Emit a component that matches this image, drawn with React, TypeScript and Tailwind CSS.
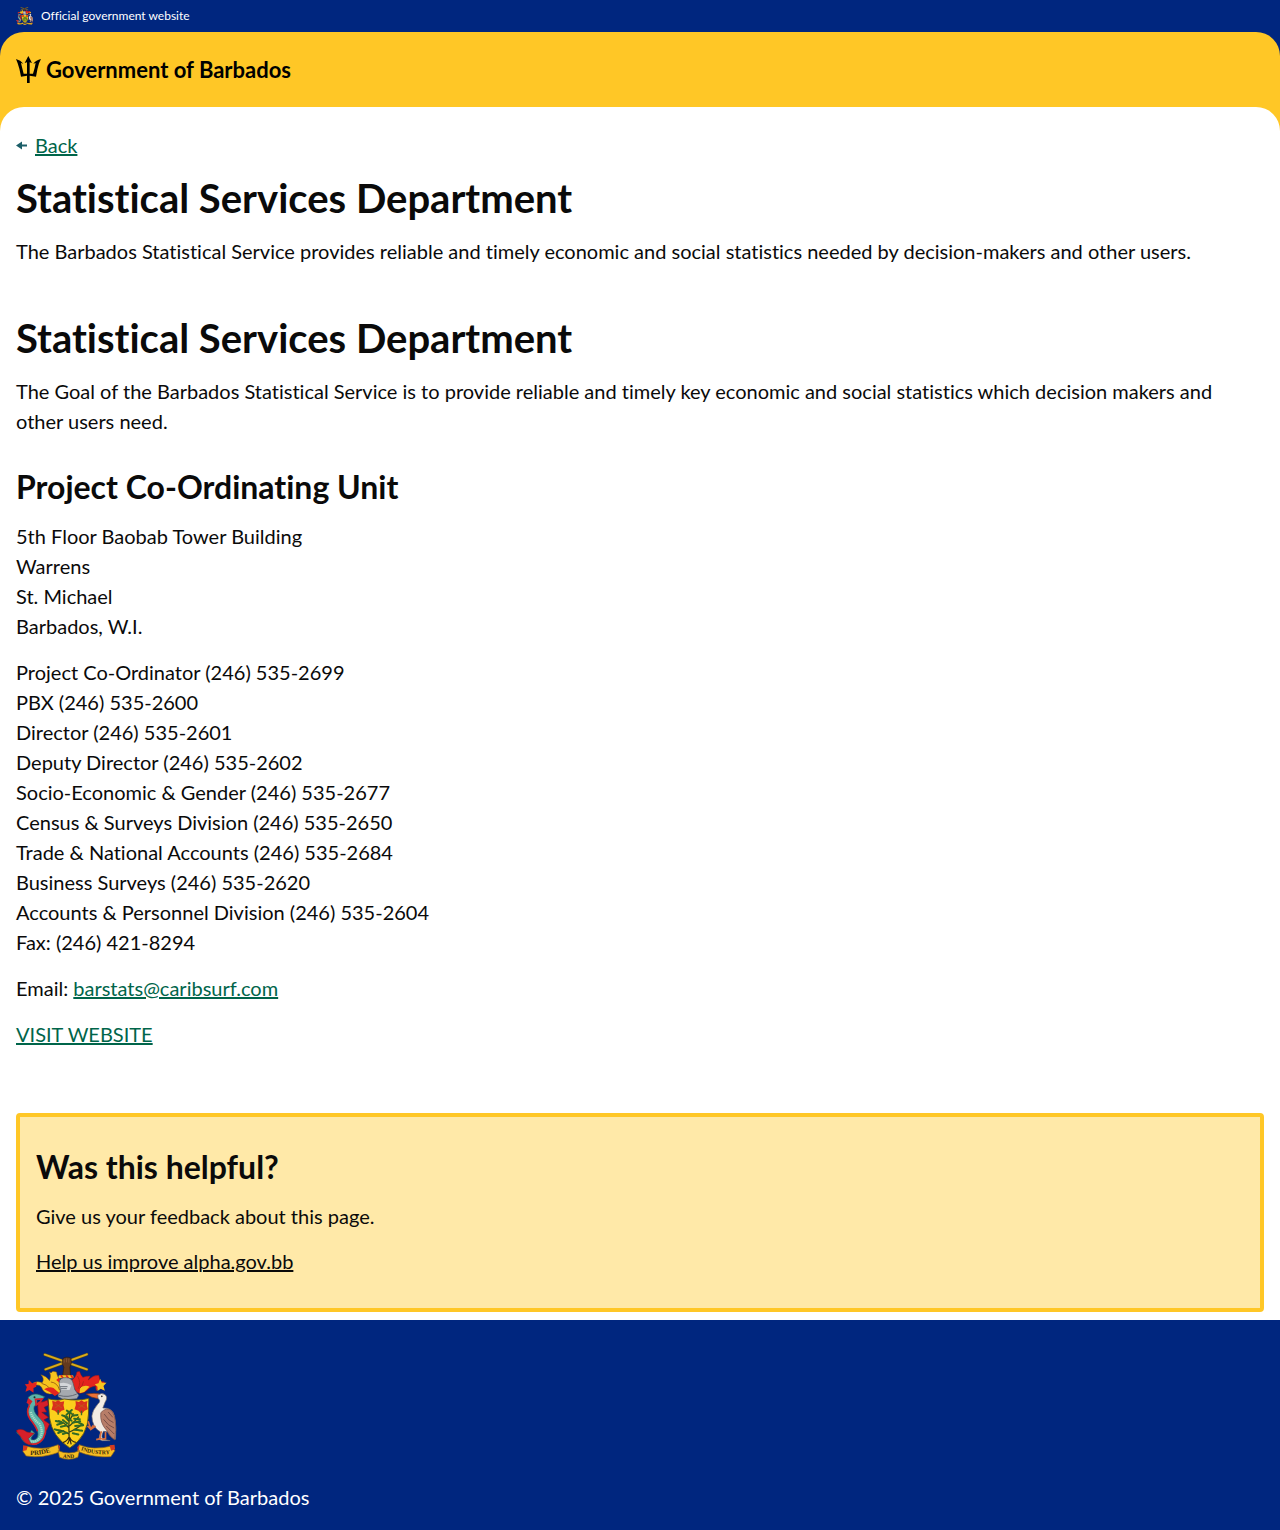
import type { ReactNode } from 'react';

const contacts = [
  'Project Co-Ordinator (246) 535-2699',
  'PBX (246) 535-2600',
  'Director (246) 535-2601',
  'Deputy Director (246) 535-2602',
  'Socio-Economic & Gender (246) 535-2677',
  'Census & Surveys Division (246) 535-2650',
  'Trade & National Accounts (246) 535-2684',
  'Business Surveys (246) 535-2620',
  'Accounts & Personnel Division (246) 535-2604',
  'Fax: (246) 421-8294',
];

const address = ['5th Floor Baobab Tower Building', 'Warrens', 'St. Michael', 'Barbados, W.I.'];

function CoatOfArms({ className }: { className: string }) {
  return (
    <svg viewBox="24 24 302 324" className={className} aria-hidden="true">
      {/* crossed sugar canes held by a fist */}
      <g strokeLinecap="round">
        <path d="M110 32 L236 76 M112 76 L236 31" stroke="#5f5014" strokeWidth="9" />
        <path d="M110 32 L236 76 M112 76 L236 31" stroke="#d9ab1e" strokeWidth="6" />
      </g>
      <path d="M164 44 q8 -8 24 -2 l2 14 -5 14 2 28 -24 0 4 -28 -5 -12z" fill="#633a1e" stroke="#2e1a0d" strokeWidth="2" />
      <path d="M168 46 v10 M175 43 v12 M182 44 v12" stroke="#94613a" strokeWidth="2" />
      {/* mantling */}
      <path d="M158 112 C150 100 146 94 145 84 L134 82 Q128 90 124 84 Q130 96 124 110 Q116 96 98 92 Q110 104 102 116 Q88 110 76 116 L78 124 Q94 120 100 130 Q106 148 124 150 L156 148z" fill="#f7c51e" stroke="#80550e" strokeWidth="1.5" />
      <path d="M62 108 l10 10 14 -4 -2 14 -8 4 0 14 -12 -8 -12 5 4 -14 -6 -8 11 -1z" fill="#e4241e" />
      <path d="M154 100 l-10 8 12 10z M108 136 q14 -10 28 -4 l18 16 -14 8 q-16 -14 -32 -20z" fill="#e4241e" />
      <path d="M128 114 q20 2 26 24 M100 118 q16 4 24 14" fill="none" stroke="#a86b12" strokeWidth="3" />
      <path d="M188 112 C198 102 204 98 206 84 L214 82 Q218 94 224 100 Q234 96 246 96 L240 108 Q256 92 272 94 L276 112 290 114 284 124 286 138 274 132 264 140 262 126 Q246 128 238 138 Q222 154 204 144z" fill="#e4241e" stroke="#87171c" strokeWidth="1.5" />
      <path d="M276 104 l5 12 14 0 -9 10 4 14 -12 -6 -10 7 0 -13 -8 -7 11 -3z M216 130 q16 -8 28 -2 l-16 16 -14 4z" fill="#f7c51e" />
      <path d="M208 96 q12 20 2 38 M226 112 q-2 14 -12 22" fill="none" stroke="#b52219" strokeWidth="3" />
      {/* wreath and helmet */}
      <rect x="151" y="94" width="45" height="9" rx="4" fill="#f7c51e" />
      <path d="M158 94 l7 9 M174 94 l7 9 M188 94 l6 8" stroke="#e4241e" strokeWidth="5" />
      <path d="M153 116 Q154 100 174 101 Q192 101 195 118 L200 137 212 154 206 164 168 168 150 158 Q147 151 157 144z" fill="#a5a9af" stroke="#4d535e" strokeWidth="2" />
      <path d="M154 118 Q172 112 190 124 L184 138 160 138z" fill="#d4d7db" />
      <path d="M156 128 h22 M158 134 h18 M152 154 q28 8 54 -4" stroke="#555b66" strokeWidth="2.5" fill="none" />
      {/* shield */}
      <path d="M120 164 Q148 172 168 165 Q210 172 242 163 L241 210 Q240 276 185 312 Q132 278 124 222z" fill="#fbd01c" stroke="#564d12" strokeWidth="2.5" />
      <path d="M132 170 l10 3 8 -4 8 5 10 -2 -2 12 3 13 -9 3 -10 10 -10 -10 -10 -3 4 -13z M202 171 l10 3 8 -5 8 5 10 -3 -2 12 3 13 -10 4 -9 10 -9 -10 -12 -4 4 -13z" fill="#d9301d" />
      <path d="M140 178 l22 14 M160 178 l-20 14 M210 179 l22 14 M230 179 l-20 14" stroke="#b8661a" strokeWidth="2" />
      <path d="M150 198 v14 M220 200 v14" stroke="#3f6a22" strokeWidth="4" />
      {/* bearded fig tree */}
      <path d="M183 284 Q180 242 185 204 M182 270 Q162 258 148 258 M183 252 Q164 232 150 230 M184 234 L166 214 M184 264 Q210 252 222 240 M184 246 Q202 230 212 218 M185 228 L196 208" fill="none" stroke="#35451c" strokeWidth="4" />
      <path d="M182 280 q-5 12 -18 16 M184 280 q0 12 -6 20 M185 280 q4 12 18 15 M185 284 l4 17" fill="none" stroke="#352913" strokeWidth="3.5" />
      <path d="M176 200 l16 10 M191 198 l-16 14 M162 214 l18 6 M194 215 l14 -2 M198 224 l19 2 M143 231 l18 4 M147 242 l18 -5 M158 248 l18 -4 M193 236 l23 -4 M201 246 l24 -2 M140 256 l18 6 M150 267 l16 -6 M199 257 l23 3 M194 268 l18 4 M164 270 l12 -4 M164 228 l13 10 M176 222 l14 8 M212 236 l12 6" stroke="#2f6a25" strokeWidth="6" strokeLinecap="round" strokeDasharray="7 3" />
      {/* dolphin supporter */}
      <path d="M88 174 Q106 176 118 168 L121 184 108 190 116 204 101 205 121 220 107 228 124 240 116 258 96 266 88 238 90 206z" fill="#d51f2a" stroke="#7a141e" strokeWidth="2" />
      <path d="M60 160 Q76 144 97 153 L110 158 102 166 86 166 Q90 180 78 188 Q74 202 92 220 Q124 248 107 282 Q94 306 66 302 Q44 298 36 276 L25 266 Q40 254 54 266 Q66 272 70 258 L80 268 Q60 288 76 288 Q94 284 88 260 Q76 238 64 222 Q52 204 62 186z" fill="#5bb4aa" stroke="#1c5a5c" strokeWidth="2" />
      <path d="M68 204 Q72 222 94 240 Q106 262 96 280 Q84 298 66 290" fill="none" stroke="#a8dcc6" strokeWidth="7" strokeDasharray="4 2" />
      <path d="M64 184 Q52 204 66 226 Q84 248 88 262 M100 222 Q122 248 106 282 Q92 304 68 300 M82 166 l20 -1 -7 10 -11 8z" fill="none" stroke="#d51f2a" strokeWidth="5" />
      <path d="M24 260 Q40 250 56 264 L78 268 60 284 70 302 Q50 302 42 284z" fill="#d51f2a" stroke="#84151d" strokeWidth="1.5" />
      <path d="M60 162 l-5 14 10 8 8 -12z" fill="#d51f2a" />
      <circle cx="79" cy="160" r="3" fill="#14332e" />
      {/* pelican supporter */}
      <path d="M234 150 Q260 146 276 150 L270 164 Q250 162 234 150z" fill="#ed7135" stroke="#70311a" strokeWidth="2" />
      <path d="M268 154 Q280 144 291 152 Q300 160 291 174 L284 192 Q312 190 319 216 Q326 250 322 286 Q310 282 304 264 L286 262 Q276 280 286 286 L306 290 282 290 272 286 277 264 Q252 250 251 216 Q252 200 269 180 Q280 170 270 164z" fill="#f2ece4" stroke="#6f6767" strokeWidth="2" />
      <path d="M278 206 Q296 186 312 202 Q328 224 320 288 Q304 278 296 260 Q274 236 278 206z" fill="#b77d68" stroke="#744a43" strokeWidth="2" />
      <path d="M288 210 q14 22 28 26 M286 226 q14 20 32 26 M294 246 l24 24 M300 204 l14 16" fill="none" stroke="#7a5049" strokeWidth="3" />
      <path d="M262 246 L248 256 240 232 M248 256 l-10 -10 M248 254 l8 -10 M280 262 q-7 20 -2 22 l-14 3 M292 264 v20 l-10 2" fill="none" stroke="#d96d3a" strokeWidth="5" />
      <circle cx="281" cy="157" r="2.5" fill="#24201c" />
      {/* motto ribbon */}
      <g fill="#f6bd22" stroke="#8b6215" strokeWidth="2">
        <path d="M52 306 Q104 322 150 302 L154 324 Q104 344 54 336 L44 322z" />
        <path d="M213 302 Q256 320 310 306 L320 320 308 338 Q256 342 208 322z" />
        <path d="M150 320 Q182 334 214 320 L209 340 Q180 352 154 340z" />
      </g>
      <path d="M45 304 l14 3 -4 12 -11 2z M304 304 l15 -2 2 14 -12 4z M150 302 l6 4 -3 14 M214 304 l-7 5 4 14" fill="#d43b20" />
      <path id="motto-left" d="M66 333 Q104 334 140 320" fill="none" />
      <path id="motto-mid" d="M164 341 Q182 345 204 340" fill="none" />
      <path id="motto-right" d="M218 319 Q262 334 308 330" fill="none" />
      <g fontFamily="Liberation Serif, serif" fontSize="20" fontWeight="700" fill="#31250e">
        <text><textPath href="#motto-left">PRIDE</textPath></text>
        <text fontSize="16"><textPath href="#motto-mid">AND</textPath></text>
        <text fontSize="17"><textPath href="#motto-right">INDUSTRY</textPath></text>
      </g>
    </svg>
  );
}

function Trident() {
  return (
    <svg viewBox="0 0 75 81" className="h-[27px] w-[25px]" fill="#000" aria-hidden="true">
      <path d="M37 0 L48 21 L41 19 V53 H51 Q57 34 59 21 L52 23 Q60 12 75 9 L69 22 Q64 38 60 62 L41 59 V81 H33 V59 L15 62 Q11 38 5 22 L0 9 Q14 12 22 23 L15 21 Q18 34 23 53 H33 V19 L26 21z" />
    </svg>
  );
}

function Title({ children }: { children: ReactNode }) {
  return <h1 className="text-[40px] leading-[50px] font-bold">{children}</h1>;
}

const link = 'text-[#00654a] underline decoration-2 underline-offset-1';

export default function App() {
  return (
    <div className='flex min-h-screen flex-col bg-white font-["Lato",sans-serif] text-xl leading-[30px] text-[#0a0a0a] [font-variant-ligatures:none]'>
      <div className="bg-[#00267f]">
        <div className="flex h-8 items-center gap-2 px-4 text-xs text-white">
          <CoatOfArms className="h-[18px] w-[17px]" />
          <span>Official government website</span>
        </div>
        <header className="rounded-t-3xl bg-[#ffc726]">
          <div className="flex h-[75px] items-center px-4">
            <a href="#home" className="flex items-center gap-[5px] text-[22px] font-bold text-black">
              <Trident />
              <span>Government of Barbados</span>
            </a>
          </div>
          <div className="h-6 rounded-t-3xl bg-white" />
        </header>
      </div>

      <main className="px-4 pb-2">
        <nav aria-label="Back" className="flex items-center gap-2 leading-7">
          <svg viewBox="0 0 11 9" className="h-[9px] w-[11px]" aria-hidden="true">
            <path d="M0 4.5 L6 0.5 V3.5 H11 V5.5 H6 V8.5z" fill="#1b5e68" />
          </svg>
          <a href="#back" className={link}>Back</a>
        </nav>

        <section className="mt-3.5">
          <Title>Statistical Services Department</Title>
          <p className="mt-[13px]">
            The Barbados Statistical Service provides reliable and timely economic and social statistics needed by decision-makers and other users.
          </p>
        </section>

        <section className="mt-[47px]">
          <Title>Statistical Services Department</Title>
          <p className="mt-[13px]">
            The Goal of the Barbados Statistical Service is to provide reliable and timely key economic and social statistics which decision makers and other users need.
          </p>
          <h2 className="mt-[31px] text-[32px] leading-10 font-bold">Project Co-Ordinating Unit</h2>
          <address className="mt-3.5 not-italic">
            {address.map((line) => <div key={line}>{line}</div>)}
          </address>
          <div className="mt-4">
            {contacts.map((line) => <div key={line}>{line}</div>)}
          </div>
          <p className="mt-4">
            Email: <a href="mailto:barstats@caribsurf.com" className={link}>barstats@caribsurf.com</a>
          </p>
          <p className="mt-4"><a href="#website" className={link}>VISIT WEBSITE</a></p>
        </section>

        <aside className="mt-16 rounded-sm border-4 border-[#ffc726] bg-[#ffe9a8] px-4 pt-[30px] pb-8">
          <h2 className="text-[32px] leading-10 font-bold">Was this helpful?</h2>
          <p className="mt-3.5">Give us your feedback about this page.</p>
          <p className="mt-[15px]">
            <a href="#feedback" className="underline decoration-2 underline-offset-1">Help us improve alpha.gov.bb</a>
          </p>
        </aside>
      </main>

      <footer className="grow bg-[#00267f] px-4 pt-8 pb-4 text-white">
        <CoatOfArms className="h-[108px] w-[101px]" />
        <p className="mt-[22px]">© 2025 Government of Barbados</p>
      </footer>
    </div>
  );
}
